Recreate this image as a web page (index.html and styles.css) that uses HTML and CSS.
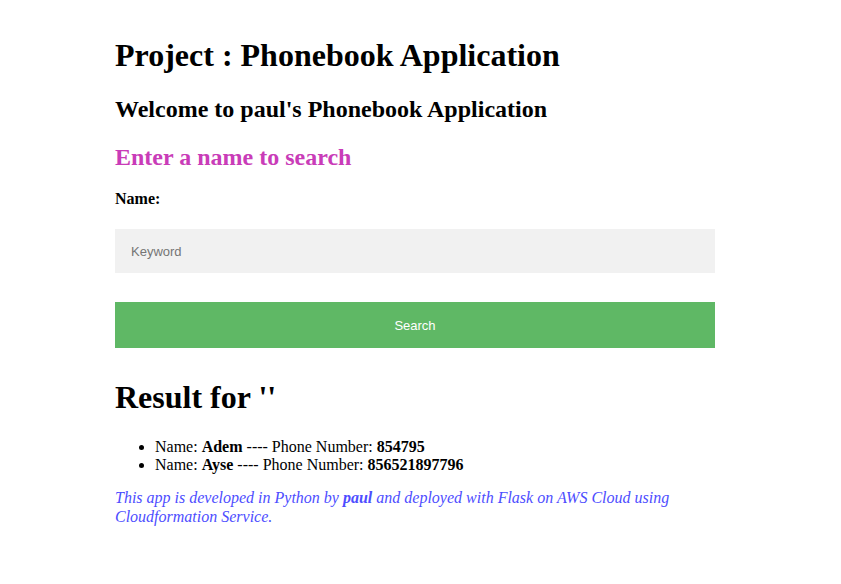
FILE: index.html
```html
<!DOCTYPE html>
<html>
<head>
<meta charset="utf-8">
<link rel="stylesheet" href="styles.css">
</head>
<body>
<div class="container">
  <h1 class="title">Project : Phonebook Application</h1>
  <h2 class="welcome">Welcome to paul's Phonebook Application</h2>
  <h3 class="prompt">Enter a name to search</h3>
  <form class="search-form">
    <label class="label" for="kw">Name:</label>
    <input class="keyword" id="kw" type="text" placeholder="Keyword">
    <button class="search-btn" type="button">Search</button>
  </form>
  <h1 class="result-title">Result for ''</h1>
  <ul class="results">
    <li>Name: <b>Adem</b> ---- Phone Number: <b>854795</b></li>
    <li>Name: <b>Ayse</b> ---- Phone Number: <b>856521897796</b></li>
  </ul>
  <p class="footer">This app is developed in Python by <b>paul</b> and deployed with Flask on AWS Cloud using Cloudformation Service.</p>
</div>
</body>
</html>
```

FILE: styles.css
```css
html, body {
  margin: 0;
  padding: 0;
  background: #ffffff;
}
body {
  font-family: "Liberation Serif", "Times New Roman", serif;
  color: #000;
}
.container {
  width: 600px;
  margin-left: 115px;
  padding-top: 37px;
}
.title {
  font-size: 32px;
  margin: 0 0 21px 0;
  line-height: 37px;
}
.welcome {
  font-size: 24px;
  margin: 0 0 20px 0;
  line-height: 28px;
}
.prompt {
  font-size: 24px;
  color: #c93cb8;
  margin: 0 0 19px 0;
  line-height: 28px;
}
.search-form {
  display: flex;
  flex-direction: column;
}
.label {
  font-weight: bold;
  font-size: 16px;
  line-height: 18px;
  margin-bottom: 21px;
}
.keyword {
  box-sizing: border-box;
  height: 44px;
  border: none;
  background: #f1f1f1;
  padding: 0 16px;
  font-family: "Liberation Sans", Arial, sans-serif;
  font-size: 13px;
  color: #333;
  margin: 0 0 29px 0;
  outline: none;
}
.keyword::placeholder {
  color: #757575;
}
.search-btn {
  height: 46px;
  border: none;
  background: #5fb865;
  color: #fff;
  font-family: "Liberation Sans", Arial, sans-serif;
  font-size: 13px;
  margin: 0;
  padding: 0;
}
.result-title {
  font-size: 32px;
  line-height: 37px;
  margin: 31px 0 22px 0;
}
.results {
  margin: 0 0 14px 0;
  padding-left: 40px;
  font-size: 16px;
  line-height: 18px;
}
.footer {
  margin: 0;
  font-style: italic;
  font-size: 16px;
  line-height: 19px;
  color: #4d4dff;
}
```
